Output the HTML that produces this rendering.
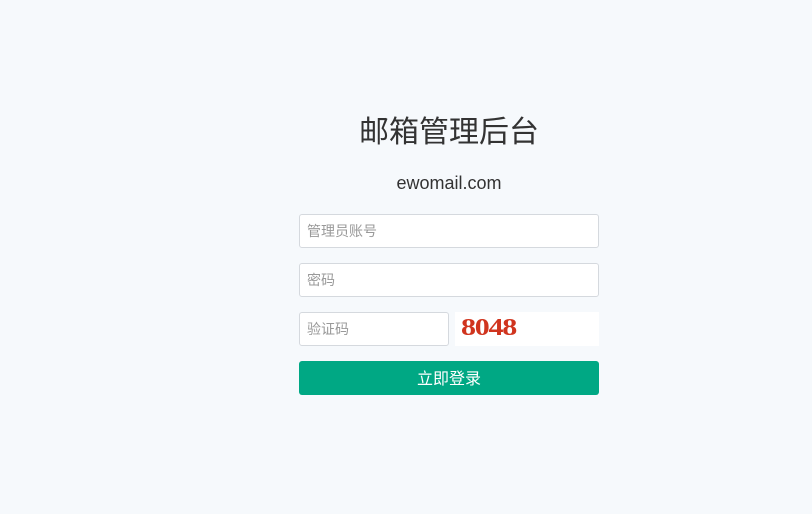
<!DOCTYPE html>
<html><head><meta charset="utf-8"><style>
body{margin:0;width:812px;height:514px;background:#f6f9fc;font-family:"Liberation Sans","Noto Sans CJK SC",sans-serif;position:relative;overflow:hidden}
.t{position:absolute;left:299px;width:300px;text-align:center;color:#333}
.in{position:absolute;left:299px;width:298px;height:32px;background:#fff;border:1px solid #d5d9de;border-radius:3px;box-sizing:content-box;font-size:14px;color:#999;line-height:33px;text-indent:7px}
</style></head><body>
<div class="t" style="top:113px;font-size:30px;line-height:40px">邮箱管理后台</div>
<div class="t" style="top:171px;font-size:18px;line-height:24px">ewomail.com</div>
<div class="in" style="top:214px">管理员账号</div>
<div class="in" style="top:263px">密码</div>
<div class="in" style="top:312px;width:148px">验证码</div>
<div style="position:absolute;left:455px;top:312px;width:144px;height:34px;background:#fff"><span style="position:absolute;left:6px;top:3px;font-family:'Liberation Serif',serif;font-weight:bold;font-size:24px;color:#d0341e;letter-spacing:-1px;transform:scaleX(1.25);transform-origin:left;display:inline-block">8048</span></div>
<div style="position:absolute;left:299px;top:361px;width:300px;height:34px;background:#00a884;border-radius:3px;color:#fff;font-size:16px;line-height:37px;text-align:center">立即登录</div>
</body></html>
